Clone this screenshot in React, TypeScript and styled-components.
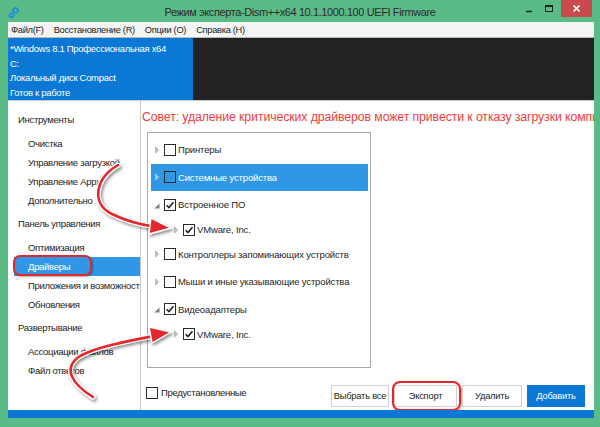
import styled, { createGlobalStyle } from "styled-components";

const GlobalStyle = createGlobalStyle`
  html, body {
    margin: 0;
    padding: 0;
    background: #fff;
  }
  body {
    font-family: "Liberation Sans", "Noto Sans", sans-serif;
    letter-spacing: -0.3px;
  }
`;

const GREEN = "#5abb87";
const BLUE = "#0a78d4";
const SELECT = "#3097e6";
const RED = "#e5262b";

const sidebar = [
  {
    title: "Инструменты",
    items: ["Очистка", "Управление загрузкой", "Управление Appx", "Дополнительно"],
  },
  {
    title: "Панель управления",
    items: ["Оптимизация", "Драйверы", "Приложения и возможности", "Обновления"],
  },
  {
    title: "Развертывание",
    items: ["Ассоциации файлов", "Файл ответов"],
  },
];

type Node = { label: string; level: number; checked: boolean; expanded?: boolean; selected?: boolean };

const tree: Node[] = [
  { label: "Принтеры", level: 0, checked: false },
  { label: "Системные устройства", level: 0, checked: false, selected: true },
  { label: "Встроенное ПО", level: 0, checked: true, expanded: true },
  { label: "VMware, Inc.", level: 1, checked: true },
  { label: "Контроллеры запоминающих устройств", level: 0, checked: false },
  { label: "Мыши и иные указывающие устройства", level: 0, checked: false },
  { label: "Видеоадаптеры", level: 0, checked: true, expanded: true },
  { label: "VMware, Inc.", level: 1, checked: true },
];

const Gear = () => (
  <svg width="12" height="13" viewBox="0 0 12 13">
    <g fill="none" stroke="#1d8fe0" strokeWidth="1.6">
      <circle cx="7.5" cy="4.5" r="2.2" />
      <circle cx="3.5" cy="9.5" r="1.8" />
    </g>
    <g stroke="#1d8fe0" strokeWidth="1.4">
      <path d="M7.5 0.8v1.4M7.5 6.8v1.4M3.8 4.5h1.4M9.8 4.5h1.4M4.9 1.9l1 1M9.1 6.1l1 1M4.9 7.1l1-1M9.1 2.9l1-1" />
      <path d="M3.5 6.5v1.2M3.5 11.3v1.2M0.5 9.5h1.2M5.3 9.5h1.2" />
    </g>
  </svg>
);

const Expander = ({ open, light }: { open?: boolean; light?: boolean }) =>
  open ? (
    <svg width="6" height="10" viewBox="0 0 6 10">
      <path d="M5.5 3.5v5h-5z" fill="#7a7a7a" />
    </svg>
  ) : (
    <svg width="6" height="10" viewBox="0 0 6 10">
      <path d="M1.5 1.8l3.2 3.2-3.2 3.2z" fill={light ? "#9fc9ee" : "#c4c4c4"} stroke={light ? "#9fc9ee" : "#b0b0b0"} strokeWidth="0.8" />
    </svg>
  );

const Check = ({ checked, onBlue }: { checked: boolean; onBlue?: boolean }) => (
  <CheckBox $onBlue={onBlue}>
    {checked && (
      <svg width="10" height="10" viewBox="0 0 10 10">
        <path d="M1.6 5.2l2.3 2.4 4.6-5.4" fill="none" stroke="#222" strokeWidth="1.6" />
      </svg>
    )}
  </CheckBox>
);

const Arrows = () => (
  <Overlay width="600" height="427" viewBox="0 0 600 427">
    <defs>
      <filter id="sh" x="-20%" y="-20%" width="140%" height="140%">
        <feDropShadow dx="1.5" dy="2" stdDeviation="1.5" floodColor="#000" floodOpacity="0.45" />
      </filter>
    </defs>
    <g filter="url(#sh)">
      <path d="M118 165 C 96 178, 90 203, 112 214 C 126 221, 142 225, 156 227" fill="none" stroke="#fff" strokeWidth="5" strokeLinecap="round" />
      <path d="M118 165 C 96 178, 90 203, 112 214 C 126 221, 142 225, 156 227" fill="none" stroke={RED} strokeWidth="2.6" strokeLinecap="round" />
      <path d="M151 218 L171 228 L149 234 Z" fill={RED} stroke="#fff" strokeWidth="1.4" strokeLinejoin="round" />
      <path d="M93 397 C 72 384, 62 368, 80 356 C 96 347, 128 341, 154 336" fill="none" stroke="#fff" strokeWidth="5" strokeLinecap="round" />
      <path d="M93 397 C 72 384, 62 368, 80 356 C 96 347, 128 341, 154 336" fill="none" stroke={RED} strokeWidth="2.6" strokeLinecap="round" />
      <path d="M149 327 L171 332 L152 343 Z" fill={RED} stroke="#fff" strokeWidth="1.4" strokeLinejoin="round" />
    </g>
  </Overlay>
);

export default function App() {
  return (
    <>
      <GlobalStyle />
      <Window>
        <TitleBar>
          <TitleIcon>
            <Gear />
          </TitleIcon>
          <Title>Режим эксперта-Dism++x64 10.1.1000.100 UEFI Firmware</Title>
          <Controls>
            <ControlButton>
              <svg width="10" height="10" viewBox="0 0 10 10">
                <path d="M2 7.5h6" stroke="#222" strokeWidth="1.5" />
              </svg>
            </ControlButton>
            <ControlButton>
              <svg width="10" height="10" viewBox="0 0 10 10">
                <rect x="1.5" y="1.5" width="7" height="6" fill="none" stroke="#222" strokeWidth="1" />
                <path d="M1.5 2.2h7" stroke="#222" strokeWidth="1.6" />
              </svg>
            </ControlButton>
            <CloseButton>
              <svg width="9" height="9" viewBox="0 0 9 9">
                <path d="M1.5 1.5l6 6M7.5 1.5l-6 6" stroke="#fff" strokeWidth="1.7" />
              </svg>
            </CloseButton>
          </Controls>
        </TitleBar>
        <Frame>
          <MenuBar>
            <MenuItem>Файл(F)</MenuItem>
            <MenuItem>Восстановление (R)</MenuItem>
            <MenuItem>Опции (O)</MenuItem>
            <MenuItem>Справка (H)</MenuItem>
          </MenuBar>
          <Header>
            <InfoPanel>
              <div>*Windows 8.1 Профессиональная x64</div>
              <div>C:</div>
              <div>Локальный диск Compact</div>
              <div>Готов к работе</div>
            </InfoPanel>
            <Console />
          </Header>
          <Main>
            <Sidebar>
              {sidebar.map((group) => (
                <Group key={group.title}>
                  <GroupTitle>{group.title}</GroupTitle>
                  <GroupItems>
                    {group.items.map((item) => (
                      <SideItem key={item} $active={item === "Драйверы"}>
                        {item}
                        {item === "Драйверы" && <Marker $w={79} $h={21} $r={7} style={{ left: -1, top: -2 }} />}
                      </SideItem>
                    ))}
                  </GroupItems>
                </Group>
              ))}
            </Sidebar>
            <Content>
              <Tip>Совет: удаление критических драйверов может привести к отказу загрузки компьютера</Tip>
              <TreeBox>
                {tree.map((node, i) => (
                  <TreeRow key={i} $level={node.level} $selected={node.selected}>
                    <Expander open={node.expanded} light={node.selected} />
                    <Check checked={node.checked} onBlue={node.selected} />
                    <TreeLabel>{node.label}</TreeLabel>
                  </TreeRow>
                ))}
              </TreeBox>
              <Footer>
                <Preset>
                  <Check checked={false} />
                  <span>Предустановленные</span>
                </Preset>
                <Buttons>
                  <Button $w={58}>Выбрать все</Button>
                  <Button $w={63}>
                    Экспорт
                    <Marker $w={69} $h={30} $r={8} style={{ left: -3, top: -5 }} />
                  </Button>
                  <Button $w={60}>Удалить</Button>
                  <Button $w={58} $primary>
                    Добавить
                  </Button>
                </Buttons>
              </Footer>
            </Content>
          </Main>
          <StatusBar />
        </Frame>
        <Arrows />
      </Window>
    </>
  );
}

const Window = styled.div`
  position: relative;
  width: 600px;
  height: 427px;
  background: ${GREEN};
  display: flex;
  flex-direction: column;
  overflow: hidden;
`;

const TitleBar = styled.div`
  height: 22px;
  display: grid;
  grid-template-columns: 1fr auto 1fr;
  align-items: start;
`;

const TitleIcon = styled.div`
  padding: 5px 0 0 8px;
`;

const Title = styled.div`
  font-size: 11px;
  letter-spacing: -0.4px;
  line-height: 24px;
  color: #2b2b2b;
  white-space: nowrap;
`;

const Controls = styled.div`
  display: flex;
  justify-content: flex-end;
  padding-right: 8px;
`;

const ControlButton = styled.div`
  width: 20px;
  height: 17px;
  display: flex;
  align-items: center;
  justify-content: center;
`;

const CloseButton = styled(ControlButton)`
  width: 31px;
  margin-left: 2px;
  background: #c94a4c;
`;

const Frame = styled.div`
  flex: 1;
  margin: 0 6px 9px 8px;
  display: flex;
  flex-direction: column;
  background: #fff;
  min-height: 0;
`;

const MenuBar = styled.div`
  height: 15px;
  display: flex;
  align-items: center;
  background: #f4f4f4;
  border-bottom: 1px solid #b9b9b9;
  padding-left: 3px;
`;

const MenuItem = styled.span`
  font-size: 9.3px;
  color: #1a1a1a;
  margin-right: 10px;
`;

const Header = styled.div`
  height: 62px;
  display: flex;
  border-bottom: 1px solid #cfcfcf;
`;

const InfoPanel = styled.div`
  width: 185px;
  background: ${BLUE};
  color: #fff;
  font-size: 9.5px;
  line-height: 14.5px;
  padding: 4px 0 0 2px;
  box-sizing: border-box;
  white-space: nowrap;
  overflow: hidden;
`;

const Console = styled.div`
  flex: 1;
  background: #222;
`;

const Main = styled.div`
  flex: 1;
  display: flex;
  min-height: 0;
`;

const Sidebar = styled.div`
  width: 133px;
  flex-shrink: 0;
  box-sizing: border-box;
  border-right: 1px solid #c8c8c8;
  padding-top: 8px;
  overflow: hidden;
`;

const Group = styled.div`
  & + & {
    margin-top: 3px;
  }
`;

const GroupTitle = styled.div`
  height: 22px;
  line-height: 22px;
  padding-left: 10px;
  font-size: 9.5px;
  color: #222;
`;

const GroupItems = styled.div`
  margin-top: 3px;
`;

const SideItem = styled.div<{ $active?: boolean }>`
  position: relative;
  height: 19px;
  line-height: 19px;
  margin-left: 6px;
  padding-left: 14px;
  font-size: 9.5px;
  white-space: nowrap;
  color: ${(p) => (p.$active ? "#fff" : "#222")};
  background: ${(p) => (p.$active ? SELECT : "transparent")};
`;

const Marker = styled.span<{ $w: number; $h: number; $r: number }>`
  position: absolute;
  width: ${(p) => p.$w}px;
  height: ${(p) => p.$h}px;
  border: 2px solid ${RED};
  border-radius: ${(p) => p.$r}px;
  box-sizing: border-box;
  box-shadow: 1px 1px 2px rgba(0, 0, 0, 0.35);
  pointer-events: none;
`;

const Content = styled.div`
  flex: 1;
  display: flex;
  flex-direction: column;
  padding-left: 1px;
  min-width: 0;
  overflow: hidden;
  position: relative;
`;

const Tip = styled.div`
  height: 31px;
  line-height: 32px;
  font-size: 12.3px;
  letter-spacing: -0.1px;
  color: #ee3b3b;
  white-space: nowrap;
  overflow: hidden;
  padding-right: 4px;
`;

const TreeBox = styled.div`
  width: 224px;
  height: 236px;
  margin-left: 5px;
  box-sizing: border-box;
  border: 1px solid #a9a9a9;
  padding: 3px 2px 0 3px;
`;

const TreeRow = styled.div<{ $level: number; $selected?: boolean }>`
  height: ${(p) => (p.$level ? 22 : 27.5)}px;
  display: flex;
  align-items: center;
  padding-left: ${(p) => 3 + p.$level * 19}px;
  background: ${(p) => (p.$selected ? SELECT : "transparent")};
  color: ${(p) => (p.$selected ? "#fff" : "#1e1e1e")};
  font-size: 9.5px;
  letter-spacing: -0.15px;
  white-space: nowrap;
  & > svg {
    margin-right: 4px;
    flex-shrink: 0;
  }
`;

const CheckBox = styled.span<{ $onBlue?: boolean }>`
  width: 12px;
  height: 12px;
  box-sizing: border-box;
  border: 1.5px solid #2a2a2a;
  background: ${(p) => (p.$onBlue ? SELECT : "#fff")};
  display: inline-flex;
  align-items: center;
  justify-content: center;
  flex-shrink: 0;
`;

const TreeLabel = styled.span`
  margin-left: 2px;
`;

const Footer = styled.div`
  margin-top: auto;
  height: 29px;
  display: flex;
  align-items: center;
  justify-content: space-between;
  padding: 0 9px 0 4px;
`;

const Preset = styled.label`
  display: flex;
  align-items: center;
  gap: 3px;
  font-size: 9.5px;
  color: #222;
  margin-top: -6px;
`;

const Buttons = styled.div`
  display: flex;
  gap: 3px;
  margin-top: 1px;
`;

const Button = styled.div<{ $w: number; $primary?: boolean }>`
  position: relative;
  width: ${(p) => p.$w}px;
  height: 22px;
  box-sizing: border-box;
  display: flex;
  align-items: center;
  justify-content: center;
  font-size: 9.3px;
  letter-spacing: -0.2px;
  white-space: nowrap;
  border: 1px solid ${(p) => (p.$primary ? BLUE : "#d2d2d2")};
  background: ${(p) => (p.$primary ? BLUE : "#fff")};
  color: ${(p) => (p.$primary ? "#fff" : "#222")};
  & + & {
    margin-left: ${(p) => (p.$primary ? 2 : 0)}px;
  }
`;

const StatusBar = styled.div`
  height: 8px;
  background: ${BLUE};
`;

const Overlay = styled.svg`
  position: absolute;
  left: 0;
  top: 0;
  pointer-events: none;
`;
